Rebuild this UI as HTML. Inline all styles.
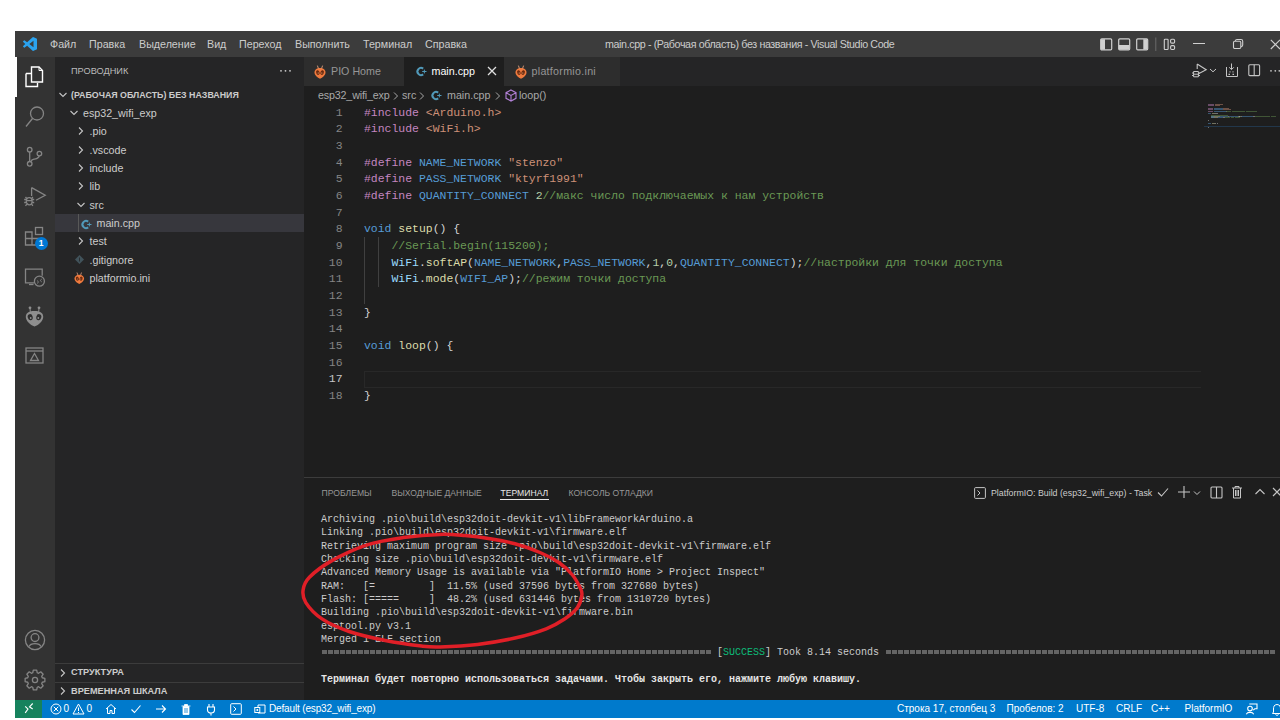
<!DOCTYPE html>
<html><head><meta charset="utf-8">
<style>
*{margin:0;padding:0;box-sizing:border-box}
html,body{width:1280px;height:720px;overflow:hidden;background:#fff;font-family:"Liberation Sans",sans-serif}
.a{position:absolute;white-space:pre}
svg.a{overflow:visible}
#title{left:15px;top:31px;width:1265px;height:26px;background:#3c3c3c}
#act{left:15px;top:57px;width:40px;height:643px;background:#333333}
#side{left:55px;top:57px;width:249px;height:643px;background:#252526}
#ed{left:304px;top:57px;width:976px;height:643px;background:#1e1e1e}
#tabs{left:304px;top:57px;width:976px;height:29px;background:#252526}
#status{left:15px;top:700px;width:1265px;height:18px;background:#007acc}
.menu{font-size:10.7px;color:#cccccc;top:38px}
.side{font-size:10.7px;color:#cccccc;line-height:18px;height:18px}
.code{font-family:"Liberation Mono",monospace;font-size:11.45px;line-height:16.67px;height:16.67px;left:364px;color:#d4d4d4;margin-top:1px}
.ln{font-family:"Liberation Mono",monospace;font-size:11.45px;line-height:16.67px;height:16.67px;left:318.5px;margin-top:1px;width:24px;text-align:right;color:#858585}
.term{font-family:"Liberation Mono",monospace;font-size:10px;line-height:13.33px;color:#cccccc;left:321px;margin-top:1px}
.st{font-size:10px;color:#fff;top:703px}
.k{color:#c586c0}.s{color:#ce9178}.m{color:#569cd6}.n{color:#b5cea8}.c{color:#6a9955}.f{color:#dcdcaa}.v{color:#9cdcfe}.b{color:#d4d4d4}.p{color:#d4d4d4}
</style></head><body>
<div class="a" id="title"></div>
<div class="a" id="act"></div>
<div class="a" id="side"></div>
<div class="a" id="ed"></div>
<div class="a" id="tabs"></div>
<div class="a" id="status"></div>

<div class="a" style="left:322px;top:650px;width:390px;height:3.5px;background:repeating-linear-gradient(90deg,#646464 0,#646464 5px,transparent 5px,transparent 6px)"></div>
<div class="a" style="left:886px;top:650px;width:390px;height:3.5px;background:repeating-linear-gradient(90deg,#646464 0,#646464 5px,transparent 5px,transparent 6px)"></div>
<!-- title bar -->
<svg class="a" style="left:22.5px;top:37px" width="14" height="14" viewBox="0 0 100 100">
<path d="M70.9 99.3 a6.2 6.2 0 0 0 5-0.2 l20.6-9.9 a6.25 6.25 0 0 0 3.5-5.6 V16.4 a6.25 6.25 0 0 0-3.5-5.6 L75.9 0.9 a6.2 6.2 0 0 0-7.1 1.2 L29.4 38 L12.2 25 a4.2 4.2 0 0 0-5.3 0.2 L1.4 30.3 a4.2 4.2 0 0 0 0 6.2 L16.3 50 L1.4 63.6 a4.2 4.2 0 0 0 0 6.2 l5.5 5 a4.2 4.2 0 0 0 5.3 0.2 l17.2-13 L68.8 97.9 a6.2 6.2 0 0 0 2.1 1.4 z M75 27.3 L45.1 50 L75 72.7 z" fill="#2ba3ef" fill-rule="evenodd"/></svg>
<div class="a menu" style="left:50px">Файл</div>
<div class="a menu" style="left:89px">Правка</div>
<div class="a menu" style="left:139px">Выделение</div>
<div class="a menu" style="left:207px">Вид</div>
<div class="a menu" style="left:239px">Переход</div>
<div class="a menu" style="left:295px">Выполнить</div>
<div class="a menu" style="left:363px">Терминал</div>
<div class="a menu" style="left:425px">Справка</div>
<div class="a menu" style="left:605px;letter-spacing:-0.38px">main.cpp - (Рабочая область) без названия - Visual Studio Code</div>

<div class="a" style="left:15px;top:57px;width:1.5px;height:40px;background:#fff"></div>
<svg class="a" style="left:25px;top:66px" width="20" height="22" viewBox="0 0 20 22">
<path d="M1 7.5 H6 M1 7.5 V20.5 H12.5 V17" fill="none" stroke="#fff" stroke-width="1.4"/>
<path d="M6.5 1 H14 L17.5 4.5 V16 H6.5 Z" fill="none" stroke="#fff" stroke-width="1.4"/>
<path d="M14 1 V4.5 H17.5" fill="none" stroke="#fff" stroke-width="1"/>
</svg>
<svg class="a" style="left:24px;top:105px" width="22" height="24" viewBox="0 0 22 24">
<circle cx="13" cy="8.5" r="6.5" fill="none" stroke="#858585" stroke-width="1.3"/><path d="M8.5 13.5 L2 21.5" fill="none" stroke="#858585" stroke-width="1.3" stroke-width="1.5"/></svg>
<svg class="a" style="left:24px;top:144px" width="22" height="24" viewBox="0 0 22 24">
<circle cx="5.7" cy="5.7" r="2.3" fill="none" stroke="#858585" stroke-width="1.3"/><circle cx="5.7" cy="19.8" r="2.3" fill="none" stroke="#858585" stroke-width="1.3"/><circle cx="15.4" cy="9.6" r="2.3" fill="none" stroke="#858585" stroke-width="1.3"/>
<path d="M5.7 8 V17.5 M15.2 11.9 C15 14.5 12 14.8 10 15.2 C8.5 15.5 7.2 16.5 7 17.7" fill="none" stroke="#858585" stroke-width="1.3"/></svg>
<svg class="a" style="left:23px;top:184px" width="24" height="24" viewBox="0 0 24 24">
<path d="M8.6 3.6 L22.2 11.3 L13 16.2" fill="none" stroke="#858585" stroke-width="1.3"/><path d="M8.6 3.6 V12" fill="none" stroke="#858585" stroke-width="1.3"/>
<ellipse cx="6.2" cy="17.2" rx="2.9" ry="3.6" fill="none" stroke="#858585" stroke-width="1.3" stroke-width="1.2"/><path d="M3.3 15.5 H1.2 M3.3 18.5 H1.2 M9.1 15.5 H11.2 M9.1 18.5 H11.2 M3.8 14.6 L2.5 13 M8.6 14.6 L9.9 13 M3.8 20.2 L2.5 21.8 M8.6 20.2 L9.9 21.8 M3.3 16.6 H9.1" fill="none" stroke="#858585" stroke-width="1.3" stroke-width="1"/></svg>
<svg class="a" style="left:24px;top:226px" width="24" height="24" viewBox="0 0 24 24">
<path d="M1.5 6 H8 V12.5 H14.5 V19 H1.5 Z M1.5 12.5 H8 V19" fill="none" stroke="#858585" stroke-width="1.3"/>
<rect x="11.5" y="1.5" width="7" height="7" fill="none" stroke="#858585" stroke-width="1.3"/></svg>
<div class="a" style="left:34.5px;top:236.5px;width:13px;height:13px;border-radius:7px;background:#0078d4;color:#fff;font-size:8.5px;font-weight:bold;text-align:center;line-height:13px">1</div>
<svg class="a" style="left:24px;top:267px" width="24" height="24" viewBox="0 0 24 24">
<path d="M10.2 15.8 H1.5 V2.2 H18.2 V8.8" fill="none" stroke="#858585" stroke-width="1.3"/><path d="M5 17.5 H9.5" fill="none" stroke="#858585" stroke-width="1.3"/>
<circle cx="15.4" cy="14.2" r="5" fill="none" stroke="#858585" stroke-width="1.3"/><path d="M13 13.5 L14.6 15 L13 16.5 M17.8 12 L16.2 13.5 L17.8 15" fill="none" stroke="#858585" stroke-width="0.9"/></svg>
<svg class="a" style="left:24px;top:305px" width="22" height="24" viewBox="0 0 22 24">
<path d="M10.5 6 C4 6 1.8 8.5 1.8 12 C1.8 15.5 6 20 10.5 21.5 C15 20 19.2 15.5 19.2 12 C19.2 8.5 17 6 10.5 6 Z" fill="#8e8e8e"/>
<circle cx="6" cy="2.8" r="1.4" fill="#8e8e8e"/><circle cx="15" cy="2.8" r="1.4" fill="#8e8e8e"/>
<path d="M6 3 L6.3 7 M15 3 L14.7 7" stroke="#8e8e8e" stroke-width="1"/>
<ellipse cx="6.2" cy="12.2" rx="2.5" ry="3.1" fill="#2e2e2e" transform="rotate(-15 6.2 12.2)"/><ellipse cx="14.8" cy="12.2" rx="2.5" ry="3.1" fill="#2e2e2e" transform="rotate(15 14.8 12.2)"/>
<circle cx="6.7" cy="13" r="0.9" fill="#8e8e8e"/><circle cx="14.3" cy="13" r="0.9" fill="#8e8e8e"/></svg>
<svg class="a" style="left:25px;top:347px" width="20" height="18" viewBox="0 0 20 18">
<rect x="1" y="1" width="17" height="15" fill="none" stroke="#858585" stroke-width="1.3"/><path d="M1 4 H18" fill="none" stroke="#858585" stroke-width="1.3"/><path d="M5.5 13.5 L9.5 6.5 L13.5 13.5 Z" fill="none" stroke="#858585" stroke-width="1.3"/></svg>
<svg class="a" style="left:24px;top:629px" width="22" height="22" viewBox="0 0 22 22">
<circle cx="11" cy="11" r="9.6" fill="none" stroke="#858585" stroke-width="1.3"/><circle cx="11" cy="8.6" r="3.9" fill="none" stroke="#858585" stroke-width="1.3"/><path d="M5 17.6 C6.5 13.6 15.5 13.6 17 17.6" fill="none" stroke="#858585" stroke-width="1.3"/></svg>
<svg class="a" style="left:23.5px;top:669px" width="22" height="22" viewBox="0 0 22 22">
<path d="M20.86 9.31 L20.86 12.69 L18.26 13.25 L17.72 14.55 L19.17 16.77 L16.77 19.17 L14.55 17.72 L13.25 18.26 L12.69 20.86 L9.31 20.86 L8.75 18.26 L7.45 17.72 L5.23 19.17 L2.83 16.77 L4.28 14.55 L3.74 13.25 L1.14 12.69 L1.14 9.31 L3.74 8.75 L4.28 7.45 L2.83 5.23 L5.23 2.83 L7.45 4.28 L8.75 3.74 L9.31 1.14 L12.69 1.14 L13.25 3.74 L14.55 4.28 L16.77 2.83 L19.17 5.23 L17.72 7.45 L18.26 8.75 Z" fill="none" stroke="#858585" stroke-width="1.3" stroke-linejoin="round"/>
<circle cx="11" cy="11" r="2.6" fill="none" stroke="#858585" stroke-width="1.3"/></svg>
<div class="a" style="left:71px;top:66px;font-size:9.2px;color:#bbbbbb">ПРОВОДНИК</div>
<svg class="a" style="left:278px;top:69px" width="16" height="4" viewBox="0 0 16 4"><circle cx="3" cy="1.8" r="0.9" fill="#cccccc"/><circle cx="7.5" cy="1.8" r="0.9" fill="#cccccc"/><circle cx="12" cy="1.8" r="0.9" fill="#cccccc"/></svg>
<div class="a" style="left:55px;top:214px;width:249px;height:18.3px;background:#37373d"></div>
<div class="a" style="left:78px;top:214px;width:1px;height:18.3px;background:#585858"></div>
<svg class="a" style="left:58px;top:89.6px" width="10" height="10" viewBox="0 0 10 10"><path d="M1.5 3 L5 6.5 L8.5 3" fill="none" stroke="#c5c5c5" stroke-width="1.1"/></svg>
<div class="a side" style="left:71px;top:85.6px;font-weight:bold;font-size:8.85px;">(РАБОЧАЯ ОБЛАСТЬ) БЕЗ НАЗВАНИЯ</div>
<svg class="a" style="left:69px;top:107.92999999999999px" width="10" height="10" viewBox="0 0 10 10"><path d="M1.5 3 L5 6.5 L8.5 3" fill="none" stroke="#c5c5c5" stroke-width="1.1"/></svg>
<div class="a side" style="left:83px;top:103.9px;">esp32_wifi_exp</div>
<svg class="a" style="left:76px;top:126.25999999999999px" width="10" height="10" viewBox="0 0 10 10"><path d="M3 1.5 L6.5 5 L3 8.5" fill="none" stroke="#c5c5c5" stroke-width="1.1"/></svg>
<div class="a side" style="left:89.5px;top:122.3px;">.pio</div>
<svg class="a" style="left:76px;top:144.58999999999997px" width="10" height="10" viewBox="0 0 10 10"><path d="M3 1.5 L6.5 5 L3 8.5" fill="none" stroke="#c5c5c5" stroke-width="1.1"/></svg>
<div class="a side" style="left:89.5px;top:140.6px;">.vscode</div>
<svg class="a" style="left:76px;top:162.92px" width="10" height="10" viewBox="0 0 10 10"><path d="M3 1.5 L6.5 5 L3 8.5" fill="none" stroke="#c5c5c5" stroke-width="1.1"/></svg>
<div class="a side" style="left:89.5px;top:158.9px;">include</div>
<svg class="a" style="left:76px;top:181.25px" width="10" height="10" viewBox="0 0 10 10"><path d="M3 1.5 L6.5 5 L3 8.5" fill="none" stroke="#c5c5c5" stroke-width="1.1"/></svg>
<div class="a side" style="left:89.5px;top:177.2px;">lib</div>
<svg class="a" style="left:76px;top:199.57999999999998px" width="10" height="10" viewBox="0 0 10 10"><path d="M1.5 3 L5 6.5 L8.5 3" fill="none" stroke="#c5c5c5" stroke-width="1.1"/></svg>
<div class="a side" style="left:89.5px;top:195.6px;">src</div>
<div class="a side" style="left:96.5px;top:213.9px;">main.cpp</div>
<svg class="a" style="left:76px;top:236.23999999999998px" width="10" height="10" viewBox="0 0 10 10"><path d="M3 1.5 L6.5 5 L3 8.5" fill="none" stroke="#c5c5c5" stroke-width="1.1"/></svg>
<div class="a side" style="left:89.5px;top:232.2px;">test</div>
<div class="a side" style="left:89.5px;top:250.6px;">.gitignore</div>
<div class="a side" style="left:89.5px;top:268.9px;">platformio.ini</div>
<svg class="a" style="left:81px;top:218.5px" width="11" height="11" viewBox="0 0 11 11">
<path d="M7.2 2.6 A3.6 3.6 0 1 0 7.2 8.4" fill="none" stroke="#519aba" stroke-width="2"/>
<path d="M6.2 5.5 H10.5 M8.35 3.6 V7.4" stroke="#519aba" stroke-width="1"/></svg>
<svg class="a" style="left:74px;top:254px" width="11" height="11" viewBox="0 0 11 11"><path d="M5.5 1 L10 5.5 L5.5 10 L1 5.5 Z" fill="#41535b"/><path d="M5.5 3.5 V7.5" stroke="#252526" stroke-width="0.8"/></svg>
<svg class="a" style="left:74.3px;top:271.8px" width="10.5" height="12.25" viewBox="0 0 12 14">
<path d="M6 3 C2.5 3 0.5 5 0.5 7.5 C0.5 10 3.5 12.8 6 13.8 C8.5 12.8 11.5 10 11.5 7.5 C11.5 5 9.5 3 6 3 Z" fill="#ee7a3e"/>
<path d="M3.4 0.6 L4.4 3.4 M8.6 0.6 L7.6 3.4" stroke="#e0a080" stroke-width="0.9"/>
<ellipse cx="3.9" cy="7.6" rx="1.7" ry="2.4" fill="#6e2a0e" transform="rotate(-20 3.9 7.6)"/><ellipse cx="8.1" cy="7.6" rx="1.7" ry="2.4" fill="#6e2a0e" transform="rotate(20 8.1 7.6)"/>
<circle cx="4.2" cy="8" r="0.5" fill="#ffc890"/><circle cx="7.8" cy="8" r="0.5" fill="#ffc890"/></svg>
<div class="a" style="left:55px;top:663px;width:249px;height:1px;background:#3c3c3c"></div>
<div class="a" style="left:55px;top:681.5px;width:249px;height:1px;background:#3c3c3c"></div>
<svg class="a" style="left:58px;top:667.5px" width="10" height="10" viewBox="0 0 10 10"><path d="M3 1.5 L6.5 5 L3 8.5" fill="none" stroke="#c5c5c5" stroke-width="1.1"/></svg>
<svg class="a" style="left:58px;top:686px" width="10" height="10" viewBox="0 0 10 10"><path d="M3 1.5 L6.5 5 L3 8.5" fill="none" stroke="#c5c5c5" stroke-width="1.1"/></svg>
<div class="a" style="left:71px;top:667px;font-size:9.2px;font-weight:bold;color:#cccccc">СТРУКТУРА</div>
<div class="a" style="left:71px;top:685.5px;font-size:9.2px;font-weight:bold;color:#cccccc">ВРЕМЕННАЯ ШКАЛА</div>
<div class="a" style="left:304px;top:57px;width:100px;height:29px;background:#2d2d2d"></div>
<div class="a" style="left:404px;top:57px;width:100px;height:29px;background:#1e1e1e"></div>
<div class="a" style="left:504px;top:57px;width:116px;height:29px;background:#2d2d2d"></div>
<svg class="a" style="left:314.0px;top:64.5px" width="12" height="14" viewBox="0 0 12 14">
<path d="M6 3 C2.5 3 0.5 5 0.5 7.5 C0.5 10 3.5 12.8 6 13.8 C8.5 12.8 11.5 10 11.5 7.5 C11.5 5 9.5 3 6 3 Z" fill="#ee7a3e"/>
<path d="M3.4 0.6 L4.4 3.4 M8.6 0.6 L7.6 3.4" stroke="#e0a080" stroke-width="0.9"/>
<ellipse cx="3.9" cy="7.6" rx="1.7" ry="2.4" fill="#6e2a0e" transform="rotate(-20 3.9 7.6)"/><ellipse cx="8.1" cy="7.6" rx="1.7" ry="2.4" fill="#6e2a0e" transform="rotate(20 8.1 7.6)"/>
<circle cx="4.2" cy="8" r="0.5" fill="#ffc890"/><circle cx="7.8" cy="8" r="0.5" fill="#ffc890"/></svg>
<div class="a" style="left:331px;top:65px;font-size:10.7px;color:#969696">PIO Home</div>
<svg class="a" style="left:416px;top:66px" width="11" height="11" viewBox="0 0 11 11">
<path d="M7.2 2.6 A3.6 3.6 0 1 0 7.2 8.4" fill="none" stroke="#519aba" stroke-width="2"/>
<path d="M6.2 5.5 H10.5 M8.35 3.6 V7.4" stroke="#519aba" stroke-width="1"/></svg>
<div class="a" style="left:431.5px;top:65px;font-size:10.7px;color:#ffffff">main.cpp</div>
<svg class="a" style="left:487px;top:66px" width="10" height="10" viewBox="0 0 10 10"><path d="M1 1 L9 9 M9 1 L1 9" stroke="#e0e0e0" stroke-width="1.3"/></svg>
<svg class="a" style="left:515.0px;top:64.5px" width="12" height="14" viewBox="0 0 12 14">
<path d="M6 3 C2.5 3 0.5 5 0.5 7.5 C0.5 10 3.5 12.8 6 13.8 C8.5 12.8 11.5 10 11.5 7.5 C11.5 5 9.5 3 6 3 Z" fill="#ee7a3e"/>
<path d="M3.4 0.6 L4.4 3.4 M8.6 0.6 L7.6 3.4" stroke="#e0a080" stroke-width="0.9"/>
<ellipse cx="3.9" cy="7.6" rx="1.7" ry="2.4" fill="#6e2a0e" transform="rotate(-20 3.9 7.6)"/><ellipse cx="8.1" cy="7.6" rx="1.7" ry="2.4" fill="#6e2a0e" transform="rotate(20 8.1 7.6)"/>
<circle cx="4.2" cy="8" r="0.5" fill="#ffc890"/><circle cx="7.8" cy="8" r="0.5" fill="#ffc890"/></svg>
<div class="a" style="left:531.5px;top:65px;font-size:10.7px;color:#969696;letter-spacing:0.28px">platformio.ini</div>
<svg class="a" style="left:1190px;top:62px" width="28" height="18" viewBox="0 0 28 18">
<path d="M7.2 2 L16.2 7.8 L9 11.5 M7.2 2 V7" fill="none" stroke="#c5c5c5" stroke-width="1.1"/>
<path d="M3.6 9.5 H8.4 V14.8 H3.6 Z M2 11 H3.6 M2 13.5 H3.6 M8.4 11 H10 M8.4 13.5 H10 M3.6 12.2 H8.4" fill="none" stroke="#c5c5c5" stroke-width="1"/>
<path d="M20 7 L23 9.8 L26 7" fill="none" stroke="#c5c5c5" stroke-width="1"/></svg>
<svg class="a" style="left:1224px;top:62px" width="16" height="17" viewBox="0 0 16 17">
<path d="M2.5 5 V14.5 H13.5 V5" fill="none" stroke="#c5c5c5" stroke-width="1"/>
<path d="M7.5 1.5 V7.5 M5.2 5.3 L7.5 7.6 L9.8 5.3" fill="none" stroke="#c5c5c5" stroke-width="1"/>
<path d="M5.5 9.8 h1 M8.5 9.8 h1 M4.5 12.3 h1.5 M8.5 12.3 h1.5" stroke="#c5c5c5" stroke-width="1.2"/></svg>
<svg class="a" style="left:1247px;top:63px" width="14" height="14" viewBox="0 0 14 14">
<rect x="1.8" y="1.8" width="10.8" height="10.8" rx="1" fill="none" stroke="#c5c5c5" stroke-width="1.1"/><path d="M7.2 1.8 V12.6" stroke="#c5c5c5" stroke-width="1.1"/></svg>
<svg class="a" style="left:1268px;top:69px" width="14" height="4" viewBox="0 0 14 4"><circle cx="3" cy="1.8" r="0.9" fill="#c5c5c5"/><circle cx="7.3" cy="1.8" r="0.9" fill="#c5c5c5"/><circle cx="11.3" cy="1.8" r="0.9" fill="#c5c5c5"/></svg>
<div class="a" style="left:318px;font-size:10.7px;color:#a9a9a9;top:89px;letter-spacing:-0.15px">esp32_wifi_exp</div>
<svg class="a" style="left:391.5px;top:91px" width="8" height="10" viewBox="0 0 8 10"><path d="M2 1.5 L5.5 5 L2 8.5" fill="none" stroke="#a9a9a9" stroke-width="1"/></svg>
<div class="a" style="left:402px;font-size:10.7px;color:#a9a9a9;top:89px">src</div>
<svg class="a" style="left:417.5px;top:91px" width="8" height="10" viewBox="0 0 8 10"><path d="M2 1.5 L5.5 5 L2 8.5" fill="none" stroke="#a9a9a9" stroke-width="1"/></svg>
<svg class="a" style="left:430.5px;top:90px" width="11" height="11" viewBox="0 0 11 11">
<path d="M7.2 2.6 A3.6 3.6 0 1 0 7.2 8.4" fill="none" stroke="#519aba" stroke-width="2"/>
<path d="M6.2 5.5 H10.5 M8.35 3.6 V7.4" stroke="#519aba" stroke-width="1"/></svg>
<div class="a" style="left:447px;font-size:10.7px;color:#a9a9a9;top:89px">main.cpp</div>
<svg class="a" style="left:493.5px;top:91px" width="8" height="10" viewBox="0 0 8 10"><path d="M2 1.5 L5.5 5 L2 8.5" fill="none" stroke="#a9a9a9" stroke-width="1"/></svg>
<svg class="a" style="left:505px;top:88.5px" width="12" height="13" viewBox="0 0 12 13">
<path d="M6 1 L11 3.7 V9.3 L6 12 L1 9.3 V3.7 Z M1 3.7 L6 6.4 L11 3.7 M6 6.4 V12" fill="none" stroke="#b180d7" stroke-width="1.1"/></svg>
<div class="a" style="left:519px;font-size:10.7px;color:#a9a9a9;top:89px">loop()</div>
<div class="a" style="left:364px;top:371.2px;width:837px;height:16.5px;border:1.5px solid #282828;border-right:none"></div>
<div class="a" style="left:364px;top:237.03px;width:1px;height:66.68px;background:#404040"></div>
<div class="a" style="left:377.5px;top:237.03px;width:1px;height:50.01px;background:#404040"></div>
<div class="a ln" style="top:103.67px;color:#858585">1</div>
<div class="a code" style="top:103.67px"><span class="k">#include</span> <span class="s">&lt;Arduino.h&gt;</span></div>
<div class="a ln" style="top:120.34px;color:#858585">2</div>
<div class="a code" style="top:120.34px"><span class="k">#include</span> <span class="s">&lt;WiFi.h&gt;</span></div>
<div class="a ln" style="top:137.01px;color:#858585">3</div>
<div class="a ln" style="top:153.68px;color:#858585">4</div>
<div class="a code" style="top:153.68px"><span class="k">#define</span> <span class="m">NAME_NETWORK</span> <span class="s">"stenzo"</span></div>
<div class="a ln" style="top:170.35px;color:#858585">5</div>
<div class="a code" style="top:170.35px"><span class="k">#define</span> <span class="m">PASS_NETWORK</span> <span class="s">"ktyrf1991"</span></div>
<div class="a ln" style="top:187.02px;color:#858585">6</div>
<div class="a code" style="top:187.02px"><span class="k">#define</span> <span class="m">QUANTITY_CONNECT</span> <span class="n">2</span><span class="c">//макс число подключаемых к нам устройств</span></div>
<div class="a ln" style="top:203.69px;color:#858585">7</div>
<div class="a ln" style="top:220.36px;color:#858585">8</div>
<div class="a code" style="top:220.36px"><span class="m">void</span> <span class="f">setup</span><span class="b">()</span> <span class="b">{</span></div>
<div class="a ln" style="top:237.03px;color:#858585">9</div>
<div class="a code" style="top:237.03px">    <span class="c">//Serial.begin(115200);</span></div>
<div class="a ln" style="top:253.70px;color:#858585">10</div>
<div class="a code" style="top:253.70px">    <span class="v">WiFi</span>.<span class="f">softAP</span><span class="b">(</span><span class="m">NAME_NETWORK</span>,<span class="m">PASS_NETWORK</span>,<span class="n">1</span>,<span class="n">0</span>,<span class="m">QUANTITY_CONNECT</span><span class="b">)</span>;<span class="c">//настройки для точки доступа</span></div>
<div class="a ln" style="top:270.37px;color:#858585">11</div>
<div class="a code" style="top:270.37px">    <span class="v">WiFi</span>.<span class="f">mode</span><span class="b">(</span><span class="m">WIFI_AP</span><span class="b">)</span>;<span class="c">//режим точки доступа</span></div>
<div class="a ln" style="top:287.04px;color:#858585">12</div>
<div class="a ln" style="top:303.71px;color:#858585">13</div>
<div class="a code" style="top:303.71px"><span class="b">}</span></div>
<div class="a ln" style="top:320.38px;color:#858585">14</div>
<div class="a ln" style="top:337.05px;color:#858585">15</div>
<div class="a code" style="top:337.05px"><span class="m">void</span> <span class="f">loop</span><span class="b">()</span> <span class="b">{</span></div>
<div class="a ln" style="top:353.72px;color:#858585">16</div>
<div class="a ln" style="top:370.39px;color:#c6c6c6">17</div>
<div class="a ln" style="top:387.06px;color:#858585">18</div>
<div class="a code" style="top:387.06px"><span class="b">}</span></div>
<div class="a" style="left:304px;top:477px;width:976px;height:1px;background:#3c3c3c"></div>
<div class="a" style="left:321.5px;font-size:8.6px;top:488px;color:#969696">ПРОБЛЕМЫ</div>
<div class="a" style="left:391.5px;font-size:8.6px;top:488px;color:#969696">ВЫХОДНЫЕ ДАННЫЕ</div>
<div class="a" style="left:500.5px;font-size:8.6px;top:488px;color:#e7e7e7">ТЕРМИНАЛ</div>
<div class="a" style="left:500px;top:498.5px;width:49px;height:1px;background:#e7e7e7"></div>
<div class="a" style="left:568.5px;font-size:8.6px;top:488px;color:#969696">КОНСОЛЬ ОТЛАДКИ</div>
<svg class="a" style="left:974px;top:487px" width="12" height="12" viewBox="0 0 12 12">
<rect x="0.6" y="0.6" width="10.8" height="10.8" rx="1" fill="none" stroke="#c5c5c5" stroke-width="1"/><path d="M3.5 3.5 L6 6 L3.5 8.5" fill="none" stroke="#c5c5c5" stroke-width="1"/></svg>
<div class="a" style="left:991px;top:488px;font-size:8.8px;color:#cccccc">PlatformIO: Build (esp32_wifi_exp) - Task</div>
<svg class="a" style="left:1156px;top:486px" width="14" height="13" viewBox="0 0 14 13"><path d="M2 6.5 L5.5 10 L12 2.5" fill="none" stroke="#c5c5c5" stroke-width="1.1"/></svg>
<svg class="a" style="left:1177px;top:485px" width="14" height="14" viewBox="0 0 14 14"><path d="M7 1 V13 M1 7 H13" stroke="#c5c5c5" stroke-width="1.1"/></svg>
<svg class="a" style="left:1193px;top:489px" width="8" height="8" viewBox="0 0 8 8"><path d="M1 2.5 L4 5.5 L7 2.5" fill="none" stroke="#c5c5c5" stroke-width="1"/></svg>
<svg class="a" style="left:1210px;top:486px" width="13" height="13" viewBox="0 0 13 13"><rect x="1" y="1" width="11" height="11" rx="1" fill="none" stroke="#c5c5c5" stroke-width="1.1"/><path d="M6.5 1 V12" stroke="#c5c5c5" stroke-width="1.1"/></svg>
<svg class="a" style="left:1231px;top:485px" width="12" height="14" viewBox="0 0 12 14"><path d="M1 3 H11 M4 3 V1.5 H8 V3 M2.5 3 V13 H9.5 V3 M4.5 5 V11 M6 5 V11 M7.5 5 V11" fill="none" stroke="#c5c5c5" stroke-width="1"/></svg>
<svg class="a" style="left:1254px;top:488px" width="12" height="8" viewBox="0 0 12 8"><path d="M1.5 6 L6 1.5 L10.5 6" fill="none" stroke="#c5c5c5" stroke-width="1.1"/></svg>
<svg class="a" style="left:1272px;top:487px" width="10" height="10" viewBox="0 0 10 10"><path d="M1 1 L9 9 M9 1 L1 9" stroke="#c5c5c5" stroke-width="1.1"/></svg>
<div class="a term" style="top:512.13px">Archiving .pio\build\esp32doit-devkit-v1\libFrameworkArduino.a</div>
<div class="a term" style="top:525.46px">Linking .pio\build\esp32doit-devkit-v1\firmware.elf</div>
<div class="a term" style="top:538.79px">Retrieving maximum program size .pio\build\esp32doit-devkit-v1\firmware.elf</div>
<div class="a term" style="top:552.12px">Checking size .pio\build\esp32doit-devkit-v1\firmware.elf</div>
<div class="a term" style="top:565.45px">Advanced Memory Usage is available via "PlatformIO Home &gt; Project Inspect"</div>
<div class="a term" style="top:578.78px">RAM:   [=         ]  11.5% (used 37596 bytes from 327680 bytes)</div>
<div class="a term" style="top:592.11px">Flash: [=====     ]  48.2% (used 631446 bytes from 1310720 bytes)</div>
<div class="a term" style="top:605.44px">Building .pio\build\esp32doit-devkit-v1\firmware.bin</div>
<div class="a term" style="top:618.77px">esptool.py v3.1</div>
<div class="a term" style="top:632.10px">Merged 1 ELF section</div>
<div class="a term" style="top:645.43px">                                                                  [<span style="color:#0dbc79">SUCCESS</span>] Took 8.14 seconds                                                                  </div>
<div class="a term" style="top:672.09px"><b style="color:#e5e5e5">Терминал будет повторно использоваться задачами. Чтобы закрыть его, нажмите любую клавишу.</b></div>
<div class="a" style="left:15px;top:700px;width:27px;height:18px;background:#16825d"></div>
<svg class="a" style="left:23px;top:703px" width="13" height="12" viewBox="0 0 13 12"><path d="M2.2 3.3 L5 6 L2.2 9.9 M9.7 0.5 L6.5 3.8 L9.7 6" fill="none" stroke="#fff" stroke-width="1.1"/></svg>
<svg class="a" style="left:50px;top:703px" width="12" height="12" viewBox="0 0 12 12"><circle cx="6" cy="6" r="5" fill="none" stroke="#fff" stroke-width="1"/><path d="M3.8 3.8 L8.2 8.2 M8.2 3.8 L3.8 8.2" stroke="#fff" stroke-width="1"/></svg>
<div class="a" style="left:63.5px;font-size:10px;color:#ffffff;top:703px">0</div>
<svg class="a" style="left:72px;top:702.5px" width="13" height="12" viewBox="0 0 13 12"><path d="M6.5 1 L12 11 H1 Z" fill="none" stroke="#fff" stroke-width="1"/><path d="M6.5 4.5 V8 M6.5 9 V10" stroke="#fff" stroke-width="1"/></svg>
<div class="a" style="left:86.5px;font-size:10px;color:#ffffff;top:703px">0</div>
<svg class="a" style="left:105px;top:703px" width="12" height="12" viewBox="0 0 12 12"><path d="M1 6 L6 1.5 L11 6 M2.5 5 V10.5 H5 V7.5 H7 V10.5 H9.5 V5" fill="none" stroke="#fff" stroke-width="1"/></svg>
<svg class="a" style="left:130px;top:703px" width="12" height="12" viewBox="0 0 12 12"><path d="M1.5 6.5 L4.5 9.5 L10.5 2.5" fill="none" stroke="#fff" stroke-width="1.1"/></svg>
<svg class="a" style="left:155px;top:703px" width="12" height="12" viewBox="0 0 12 12"><path d="M1 6 H10.5 M7 2.5 L10.5 6 L7 9.5" fill="none" stroke="#fff" stroke-width="1.1"/></svg>
<svg class="a" style="left:180px;top:702.5px" width="12" height="13" viewBox="0 0 12 13"><path d="M1.5 3 H10.5 M4.5 3 V1.5 H7.5 V3 M3 3.5 H9 V11.5 H3 Z" fill="#fff" stroke="#fff" stroke-width="0.8"/><path d="M5 5 V10 M7 5 V10" stroke="#007acc" stroke-width="0.8"/></svg>
<svg class="a" style="left:205px;top:702.5px" width="12" height="13" viewBox="0 0 12 13"><path d="M4 1 V4 M8 1 V4 M2.5 4 H9.5 V7 C9.5 9 8 10 6 10 C4 10 2.5 9 2.5 7 Z M6 10 V12.5" fill="none" stroke="#fff" stroke-width="1.1"/></svg>
<svg class="a" style="left:230px;top:703px" width="12" height="12" viewBox="0 0 12 12"><rect x="0.7" y="0.7" width="10.6" height="10.6" rx="1" fill="none" stroke="#fff" stroke-width="1"/><path d="M3.5 3.5 L6 6 L3.5 8.5" fill="none" stroke="#fff" stroke-width="1"/></svg>
<svg class="a" style="left:254px;top:703px" width="12" height="12" viewBox="0 0 12 12"><path d="M4 2 H11 V10 H4 M4 2 V4" fill="none" stroke="#fff" stroke-width="1"/><rect x="0.8" y="4.5" width="5" height="5" fill="none" stroke="#fff" stroke-width="1"/><circle cx="3.3" cy="7" r="1" fill="#fff"/></svg>
<div class="a" style="left:269px;font-size:10px;color:#ffffff;top:703px;letter-spacing:-0.15px">Default (esp32_wifi_exp)</div>
<div class="a" style="left:897px;font-size:10px;color:#ffffff;top:703px">Строка 17, столбец 3</div>
<div class="a" style="left:1006.5px;font-size:10px;color:#ffffff;top:703px">Пробелов: 2</div>
<div class="a" style="left:1076px;font-size:10px;color:#ffffff;top:703px">UTF-8</div>
<div class="a" style="left:1116px;font-size:10px;color:#ffffff;top:703px">CRLF</div>
<div class="a" style="left:1151px;font-size:10px;color:#ffffff;top:703px">C++</div>
<div class="a" style="left:1184.5px;font-size:10px;color:#ffffff;top:703px">PlatformIO</div>
<svg class="a" style="left:1245px;top:702.5px" width="14" height="13" viewBox="0 0 14 13"><circle cx="5" cy="5.6" r="2.3" fill="none" stroke="#fff" stroke-width="1.1"/><path d="M1.3 11.2 C2.3 8.8 7.7 8.8 8.7 11.2 M4.3 1 H12 V5.8 H9.8 L8.2 7.2" fill="none" stroke="#fff" stroke-width="1.1"/></svg>
<svg class="a" style="left:1271px;top:702.5px" width="12" height="13" viewBox="0 0 12 13"><path d="M6 1.5 C3 1.5 2.5 4 2.5 6 V9 L1.5 10.5 H10.5 L9.5 9 V6 C9.5 4 9 1.5 6 1.5 Z M4.5 11.5 C5 12.5 7 12.5 7.5 11.5" fill="none" stroke="#fff" stroke-width="1"/></svg>
<svg class="a" style="left:1100px;top:37.5px" width="62" height="13" viewBox="0 0 62 13">
<rect x="0.7" y="0.9" width="11" height="11" rx="1.1" fill="none" stroke="#d0d0d0" stroke-width="1.2"/><rect x="1" y="1.2" width="4" height="10.4" fill="#d0d0d0"/>
<rect x="18.7" y="0.9" width="11" height="11" rx="1.1" fill="none" stroke="#d0d0d0" stroke-width="1.2"/><rect x="19" y="7" width="10.4" height="4.6" fill="#d0d0d0"/>
<rect x="36.7" y="0.9" width="11" height="11" rx="1.1" fill="none" stroke="#d0d0d0" stroke-width="1.2"/><rect x="43.3" y="1.2" width="4.1" height="10.4" fill="#d0d0d0"/>
<path d="M55.8 -0.5 V13" stroke="#6a6a6a" stroke-width="1"/>
</svg>
<svg class="a" style="left:1163px;top:38px" width="14" height="13" viewBox="0 0 14 13">
<rect x="1.3" y="1.2" width="3.8" height="10.3" rx="0.8" fill="none" stroke="#d0d0d0" stroke-width="1.1"/>
<rect x="7.6" y="1.2" width="4" height="3.9" rx="1.2" fill="none" stroke="#d0d0d0" stroke-width="1.1"/>
<rect x="7.6" y="7.6" width="4" height="3.9" rx="1.2" fill="none" stroke="#d0d0d0" stroke-width="1.1"/></svg>
<div class="a" style="left:1193px;top:42.8px;width:12px;height:1.1px;background:#d0d0d0"></div>
<svg class="a" style="left:1232px;top:38px" width="12" height="12" viewBox="0 0 12 12">
<rect x="1.5" y="3.2" width="7.3" height="7.3" rx="1.2" fill="none" stroke="#d0d0d0" stroke-width="1.1"/><path d="M3.3 2.9 C3.5 1.8 4 1.5 5 1.5 H9 C10.2 1.5 10.7 2 10.7 3.2 V7 C10.7 8 10.4 8.5 9.1 8.6" fill="none" stroke="#d0d0d0" stroke-width="1.1"/></svg>
<svg class="a" style="left:1270px;top:38.5px" width="12" height="11" viewBox="0 0 12 11"><path d="M0.8 0.8 L10 10 M10 0.8 L0.8 10" stroke="#d0d0d0" stroke-width="1.1"/></svg>
<svg class="a" style="left:0;top:0" width="1280" height="720" viewBox="0 0 1280 720">
<path d="M581.9 595.0 C582.3 591.7 581.6 590.8 580.0 587.5 C578.4 584.2 576.0 579.2 572.5 575.0 C569.0 570.8 564.2 566.2 558.8 562.5 C553.3 558.8 547.3 555.6 540.0 552.5 C532.7 549.4 523.3 546.0 515.0 543.8 C506.7 541.5 498.3 540.1 490.0 538.8 C481.7 537.4 473.3 536.3 465.0 535.6 C456.7 534.9 450.3 534.1 440.0 534.4 C429.7 534.7 415.4 535.9 403.3 537.6 C391.2 539.4 379.2 541.0 367.2 544.9 C355.2 548.8 340.7 555.7 331.1 561.1 C321.5 566.5 314.1 572.5 309.4 577.3 C304.7 582.1 303.7 585.8 303.1 590.0 C302.5 594.2 302.7 597.8 305.8 602.6 C308.9 607.4 314.8 614.1 322.0 618.9 C329.2 623.7 338.6 627.9 349.2 631.5 C359.8 635.1 373.3 638.1 385.3 640.5 C397.3 642.9 412.3 644.9 421.4 646.0 C430.5 647.1 430.6 647.2 440.0 646.9 C449.4 646.6 465.0 645.9 477.5 644.4 C490.0 642.9 503.5 640.6 515.0 638.0 C526.5 635.4 537.9 632.0 546.2 628.8 C554.6 625.5 559.8 622.3 565.0 618.8 C570.2 615.2 574.7 611.5 577.5 607.5 C580.3 603.5 581.5 598.3 581.9 595.0 Z" fill="none" stroke="#e01f27" stroke-width="3.5"/>
</svg>
<div class="a" style="left:1208.00px;top:104.00px;width:5.84px;height:1.1px;background:#c586c0;opacity:0.45"></div>
<div class="a" style="left:1214.57px;top:104.00px;width:8.03px;height:1.1px;background:#ce9178;opacity:0.45"></div>
<div class="a" style="left:1208.00px;top:105.33px;width:5.84px;height:1.1px;background:#c586c0;opacity:0.45"></div>
<div class="a" style="left:1214.57px;top:105.33px;width:5.84px;height:1.1px;background:#ce9178;opacity:0.45"></div>
<div class="a" style="left:1208.00px;top:107.99px;width:5.11px;height:1.1px;background:#c586c0;opacity:0.45"></div>
<div class="a" style="left:1213.84px;top:107.99px;width:8.76px;height:1.1px;background:#569cd6;opacity:0.45"></div>
<div class="a" style="left:1223.33px;top:107.99px;width:5.84px;height:1.1px;background:#ce9178;opacity:0.45"></div>
<div class="a" style="left:1208.00px;top:109.32px;width:5.11px;height:1.1px;background:#c586c0;opacity:0.45"></div>
<div class="a" style="left:1213.84px;top:109.32px;width:8.76px;height:1.1px;background:#569cd6;opacity:0.45"></div>
<div class="a" style="left:1223.33px;top:109.32px;width:8.03px;height:1.1px;background:#ce9178;opacity:0.45"></div>
<div class="a" style="left:1208.00px;top:110.65px;width:5.11px;height:1.1px;background:#c586c0;opacity:0.45"></div>
<div class="a" style="left:1213.84px;top:110.65px;width:11.68px;height:1.1px;background:#569cd6;opacity:0.45"></div>
<div class="a" style="left:1226.25px;top:110.65px;width:0.73px;height:1.1px;background:#b5cea8;opacity:0.45"></div>
<div class="a" style="left:1226.98px;top:110.65px;width:4.38px;height:1.1px;background:#6a9955;opacity:0.45"></div>
<div class="a" style="left:1232.09px;top:110.65px;width:3.65px;height:1.1px;background:#6a9955;opacity:0.45"></div>
<div class="a" style="left:1236.47px;top:110.65px;width:8.76px;height:1.1px;background:#6a9955;opacity:0.45"></div>
<div class="a" style="left:1245.96px;top:110.65px;width:0.73px;height:1.1px;background:#6a9955;opacity:0.45"></div>
<div class="a" style="left:1247.42px;top:110.65px;width:2.19px;height:1.1px;background:#6a9955;opacity:0.45"></div>
<div class="a" style="left:1250.34px;top:110.65px;width:6.57px;height:1.1px;background:#6a9955;opacity:0.45"></div>
<div class="a" style="left:1208.00px;top:113.31px;width:2.92px;height:1.1px;background:#569cd6;opacity:0.45"></div>
<div class="a" style="left:1211.65px;top:113.31px;width:3.65px;height:1.1px;background:#dcdcaa;opacity:0.45"></div>
<div class="a" style="left:1215.30px;top:113.31px;width:1.46px;height:1.1px;background:#d4d4d4;opacity:0.45"></div>
<div class="a" style="left:1217.49px;top:113.31px;width:0.73px;height:1.1px;background:#d4d4d4;opacity:0.45"></div>
<div class="a" style="left:1210.92px;top:114.64px;width:16.79px;height:1.1px;background:#6a9955;opacity:0.45"></div>
<div class="a" style="left:1210.92px;top:115.97px;width:2.92px;height:1.1px;background:#9cdcfe;opacity:0.45"></div>
<div class="a" style="left:1213.84px;top:115.97px;width:0.73px;height:1.1px;background:#d4d4d4;opacity:0.45"></div>
<div class="a" style="left:1214.57px;top:115.97px;width:4.38px;height:1.1px;background:#dcdcaa;opacity:0.45"></div>
<div class="a" style="left:1218.95px;top:115.97px;width:0.73px;height:1.1px;background:#d4d4d4;opacity:0.45"></div>
<div class="a" style="left:1219.68px;top:115.97px;width:8.76px;height:1.1px;background:#569cd6;opacity:0.45"></div>
<div class="a" style="left:1228.44px;top:115.97px;width:0.73px;height:1.1px;background:#d4d4d4;opacity:0.45"></div>
<div class="a" style="left:1229.17px;top:115.97px;width:8.76px;height:1.1px;background:#569cd6;opacity:0.45"></div>
<div class="a" style="left:1237.93px;top:115.97px;width:0.73px;height:1.1px;background:#d4d4d4;opacity:0.45"></div>
<div class="a" style="left:1238.66px;top:115.97px;width:0.73px;height:1.1px;background:#b5cea8;opacity:0.45"></div>
<div class="a" style="left:1239.39px;top:115.97px;width:0.73px;height:1.1px;background:#d4d4d4;opacity:0.45"></div>
<div class="a" style="left:1240.12px;top:115.97px;width:0.73px;height:1.1px;background:#b5cea8;opacity:0.45"></div>
<div class="a" style="left:1240.85px;top:115.97px;width:0.73px;height:1.1px;background:#d4d4d4;opacity:0.45"></div>
<div class="a" style="left:1241.58px;top:115.97px;width:11.68px;height:1.1px;background:#569cd6;opacity:0.45"></div>
<div class="a" style="left:1253.26px;top:115.97px;width:0.73px;height:1.1px;background:#d4d4d4;opacity:0.45"></div>
<div class="a" style="left:1253.99px;top:115.97px;width:0.73px;height:1.1px;background:#d4d4d4;opacity:0.45"></div>
<div class="a" style="left:1254.72px;top:115.97px;width:8.03px;height:1.1px;background:#6a9955;opacity:0.45"></div>
<div class="a" style="left:1263.48px;top:115.97px;width:2.19px;height:1.1px;background:#6a9955;opacity:0.45"></div>
<div class="a" style="left:1266.40px;top:115.97px;width:3.65px;height:1.1px;background:#6a9955;opacity:0.45"></div>
<div class="a" style="left:1270.78px;top:115.97px;width:5.11px;height:1.1px;background:#6a9955;opacity:0.45"></div>
<div class="a" style="left:1210.92px;top:117.30px;width:2.92px;height:1.1px;background:#9cdcfe;opacity:0.45"></div>
<div class="a" style="left:1213.84px;top:117.30px;width:0.73px;height:1.1px;background:#d4d4d4;opacity:0.45"></div>
<div class="a" style="left:1214.57px;top:117.30px;width:2.92px;height:1.1px;background:#dcdcaa;opacity:0.45"></div>
<div class="a" style="left:1217.49px;top:117.30px;width:0.73px;height:1.1px;background:#d4d4d4;opacity:0.45"></div>
<div class="a" style="left:1218.22px;top:117.30px;width:5.11px;height:1.1px;background:#569cd6;opacity:0.45"></div>
<div class="a" style="left:1223.33px;top:117.30px;width:0.73px;height:1.1px;background:#d4d4d4;opacity:0.45"></div>
<div class="a" style="left:1224.06px;top:117.30px;width:0.73px;height:1.1px;background:#d4d4d4;opacity:0.45"></div>
<div class="a" style="left:1224.79px;top:117.30px;width:5.11px;height:1.1px;background:#6a9955;opacity:0.45"></div>
<div class="a" style="left:1230.63px;top:117.30px;width:3.65px;height:1.1px;background:#6a9955;opacity:0.45"></div>
<div class="a" style="left:1235.01px;top:117.30px;width:5.11px;height:1.1px;background:#6a9955;opacity:0.45"></div>
<div class="a" style="left:1208.00px;top:119.96px;width:0.73px;height:1.1px;background:#d4d4d4;opacity:0.45"></div>
<div class="a" style="left:1208.00px;top:122.62px;width:2.92px;height:1.1px;background:#569cd6;opacity:0.45"></div>
<div class="a" style="left:1211.65px;top:122.62px;width:2.92px;height:1.1px;background:#dcdcaa;opacity:0.45"></div>
<div class="a" style="left:1214.57px;top:122.62px;width:1.46px;height:1.1px;background:#d4d4d4;opacity:0.45"></div>
<div class="a" style="left:1216.76px;top:122.62px;width:0.73px;height:1.1px;background:#d4d4d4;opacity:0.45"></div>
<div class="a" style="left:1208.00px;top:126.61px;width:0.73px;height:1.1px;background:#d4d4d4;opacity:0.45"></div>
<div class="a" style="left:1204px;top:125.5px;width:76px;height:1.6px;background:#264f78;opacity:0.5"></div>
</body></html>
